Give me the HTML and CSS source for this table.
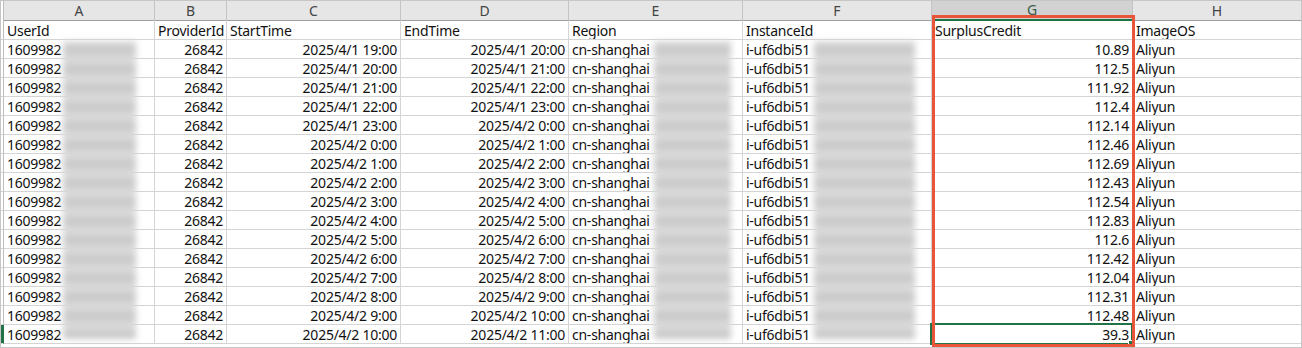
FILE: index.html
```html
<!DOCTYPE html>
<html>
<head>
<meta charset="utf-8">
<link rel="stylesheet" href="styles.css">
</head>
<body>
<div class="frame">
  <div class="grid colhead">
    <div class="rh"></div>
    <div class="ch">A</div><div class="ch">B</div><div class="ch">C</div><div class="ch">D</div>
    <div class="ch">E</div><div class="ch">F</div><div class="ch sel">G</div><div class="ch last">H</div>
  </div>
  <div class="grid row">
    <div class="rh"></div>
    <div class="c">UserId</div><div class="c">ProviderId</div><div class="c">StartTime</div><div class="c">EndTime</div>
    <div class="c">Region</div><div class="c">InstanceId</div><div class="c">SurplusCredit</div><div class="c last">ImageOS</div>
  </div>
  <div id="rows"></div>
  <div class="blur blur-a"></div>
  <div class="blur blur-e"></div>
  <div class="blur blur-f"></div>
  <div class="cellsel"><span class="handle"></span></div>
  <div class="redbox"></div>
</div>
<script>
const data = [
  ["2025/4/1 19:00","2025/4/1 20:00","10.89"],
  ["2025/4/1 20:00","2025/4/1 21:00","112.5"],
  ["2025/4/1 21:00","2025/4/1 22:00","111.92"],
  ["2025/4/1 22:00","2025/4/1 23:00","112.4"],
  ["2025/4/1 23:00","2025/4/2 0:00","112.14"],
  ["2025/4/2 0:00","2025/4/2 1:00","112.46"],
  ["2025/4/2 1:00","2025/4/2 2:00","112.69"],
  ["2025/4/2 2:00","2025/4/2 3:00","112.43"],
  ["2025/4/2 3:00","2025/4/2 4:00","112.54"],
  ["2025/4/2 4:00","2025/4/2 5:00","112.83"],
  ["2025/4/2 5:00","2025/4/2 6:00","112.6"],
  ["2025/4/2 6:00","2025/4/2 7:00","112.42"],
  ["2025/4/2 7:00","2025/4/2 8:00","112.04"],
  ["2025/4/2 8:00","2025/4/2 9:00","112.31"],
  ["2025/4/2 9:00","2025/4/2 10:00","112.48"],
  ["2025/4/2 10:00","2025/4/2 11:00","39.3"]
];
const host = document.getElementById("rows");
data.forEach((d, i) => {
  const r = document.createElement("div");
  r.className = "grid row" + (i === data.length - 1 ? " active" : "");
  r.innerHTML =
    '<div class="rh"></div>' +
    '<div class="c">1609982</div>' +
    '<div class="c num">26842</div>' +
    '<div class="c num">' + d[0] + '</div>' +
    '<div class="c num">' + d[1] + '</div>' +
    '<div class="c">cn-shanghai</div>' +
    '<div class="c">i-uf6dbi51</div>' +
    '<div class="c num">' + d[2] + '</div>' +
    '<div class="c last">Aliyun</div>';
  host.appendChild(r);
});
</script>
</body>
</html>
```

FILE: styles.css
```css
html, body {
  margin: 0;
  padding: 0;
  background: #fff;
}
.frame {
  position: relative;
  width: 1302px;
  height: 348px;
  box-sizing: border-box;
  border: 1px solid #c6c6c6;
  overflow: hidden;
  font-family: "Noto Sans", "Noto Sans CJK SC", sans-serif;
  font-size: 14px;
  letter-spacing: -0.25px;
  color: #111;
}
.grid {
  display: grid;
  grid-template-columns: 3px 151px 72px 174px 168px 174px 189px 201px 1fr;
}
.rh {
  box-sizing: border-box;
  border-right: 1px solid #bdbdbd;
}
.colhead {
  height: 20px;
  background: #e6e6e6;
  border-bottom: 1px solid #9e9e9e;
  box-sizing: border-box;
}
.colhead .rh { background: #fff; }
.ch {
  box-sizing: border-box;
  border-right: 1px solid #c4c4c4;
  text-align: center;
  line-height: 20px;
  color: #444;
  font-size: 14px;
  letter-spacing: 0;
}
.ch.sel {
  background: #d2d2d2;
  color: #3a5a46;
  border-bottom: 2px solid #217346;
  line-height: 18px;
}
.ch.last, .c.last { border-right: none; }
.row { height: 19px; }
.c {
  box-sizing: border-box;
  border-right: 1px solid #d4d4d4;
  border-bottom: 1px solid #d4d4d4;
  padding: 2px 3px 0 3px;
  line-height: 16px;
  white-space: nowrap;
  overflow: hidden;
}
.c.num { text-align: right; }
.row .rh { border-bottom: 1px solid #d4d4d4; }
.row.active .rh { box-shadow: inset -2px 0 0 #217346; border-right-color: #217346; }
.blur {
  position: absolute;
  top: 40px;
  height: 298px;
  background:
    repeating-linear-gradient(to bottom, #dedede 0px, #c6c6c6 9px, #dedede 19px);
  filter: blur(3px);
}
.blur-a { left: 62px; width: 73px; }
.blur-e { left: 653px; width: 77px; }
.blur-f { left: 813px; width: 101px; }
.cellsel {
  position: absolute;
  left: 929px;
  top: 322px;
  width: 203px;
  height: 22px;
  box-sizing: border-box;
  border: 2px solid #217346;
}
.handle {
  position: absolute;
  right: -4px;
  bottom: -4px;
  width: 5px;
  height: 5px;
  background: #217346;
  border: 1px solid #fff;
}
.redbox {
  position: absolute;
  left: 931px;
  top: 14px;
  width: 203px;
  height: 332px;
  box-sizing: border-box;
  border: 3px solid #e8553b;
}
```
